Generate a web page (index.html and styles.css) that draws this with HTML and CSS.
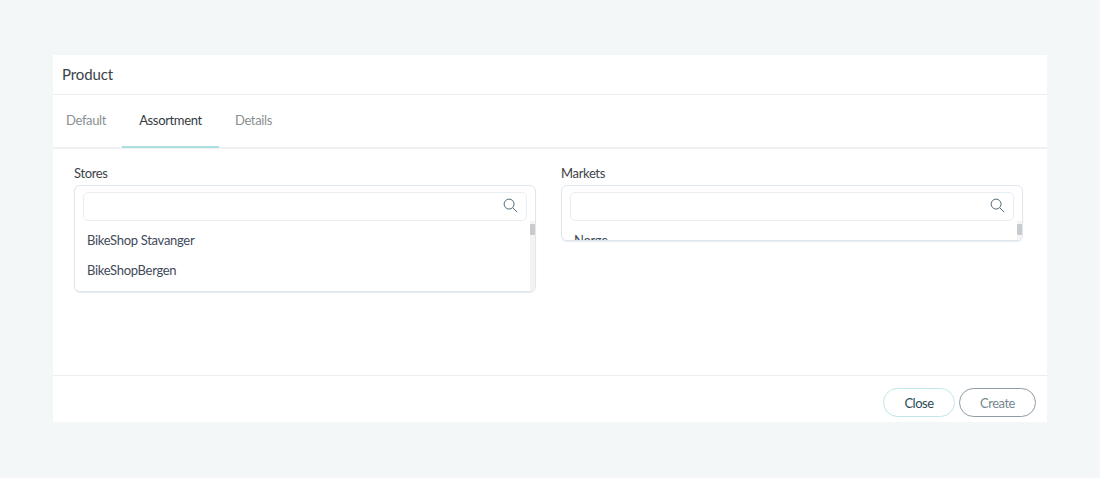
FILE: index.html
```html
<!DOCTYPE html>
<html lang="en">
<head>
<meta charset="utf-8">
<title>Product</title>
<link rel="stylesheet" href="styles.css">
</head>
<body>
<main class="card">
  <header class="card-title">Product</header>
  <nav class="tabs">
    <a class="tab">Default</a>
    <a class="tab active">Assortment</a>
    <a class="tab">Details</a>
  </nav>
  <section class="content">
    <div class="field">
      <label class="label">Stores</label>
      <div class="picker picker-tall">
        <div class="search">
          <svg class="icon" viewBox="0 0 16 16" width="16" height="16"><circle cx="6.5" cy="6.5" r="5.3"/><path d="M10.4 10.4 15 15"/></svg>
        </div>
        <div class="list">
          <div class="scroll"><span class="thumb"></span></div>
          <div class="item">BikeShop Stavanger</div>
          <div class="item">BikeShopBergen</div>
        </div>
      </div>
    </div>
    <div class="field">
      <label class="label">Markets</label>
      <div class="picker picker-short">
        <div class="search">
          <svg class="icon" viewBox="0 0 16 16" width="16" height="16"><circle cx="6.5" cy="6.5" r="5.3"/><path d="M10.4 10.4 15 15"/></svg>
        </div>
        <div class="list">
          <div class="scroll"><span class="thumb"></span></div>
          <div class="item">Norge</div>
        </div>
      </div>
    </div>
  </section>
  <footer class="actions">
    <button class="btn btn-close">Close</button>
    <button class="btn btn-create">Create</button>
  </footer>
</main>
</body>
</html>
```

FILE: styles.css
```css
* { box-sizing: border-box; }
html, body { height: 100%; }
body {
  margin: 0;
  background: #f4f7f8;
  font-family: "Lato", "Open Sans", sans-serif;
  padding: 55px 53px 56px;
}
.card {
  background: #fff;
  width: 994px;
  height: 367px;
  display: flex;
  flex-direction: column;
}
.card-title {
  height: 40px;
  padding: 9px 9px 0;
  border-bottom: 1px solid #ebeeef;
  font-size: 15px;
  line-height: 20px;
  letter-spacing: -0.1px;
  color: #3b4247;
}
.tabs {
  display: flex;
  height: 54px;
  border-bottom: 2px solid #eef0f1;
}
.tab {
  width: 69px;
  height: 53px;
  padding-top: 16px;
  font-size: 13px;
  line-height: 18px;
  text-align: center;
  color: #8a8f92;
  letter-spacing: -0.35px;
}
.tab.active {
  width: 97px;
  color: #343b40;
  border-bottom: 2px solid #abdfe0;
}
.tab:first-child { text-align: left; padding-left: 13px; }
.content {
  flex: 1;
  display: grid;
  grid-template-columns: 462px 462px;
  column-gap: 25px;
  padding: 15px 21px 0;
  align-content: start;
}
.label {
  display: block;
  height: 21px;
  font-size: 13px;
  line-height: 18px;
  color: #3b4247;
  letter-spacing: -0.35px;
}
.picker {
  border: 1px solid #dfe6ee;
  border-radius: 6px;
  padding: 6px 8px 0;
  overflow: hidden;
  box-shadow: 0 1px 1px #e8ebef;
}
.picker-tall { height: 107px; }
.picker-short { height: 56px; }
.search {
  height: 29px;
  border: 1px solid #e9edf2;
  border-radius: 5px;
  display: flex;
  justify-content: flex-end;
  align-items: center;
  padding: 0 8px 2px 0;
}
.icon {
  fill: none;
  stroke: #46626f;
  stroke-width: 1;
  width: 15px;
  height: 15px;
}
.list { margin: 0 -8px; height: 70px; position: relative; padding-left: 12px; }
.scroll {
  position: absolute;
  right: 0;
  top: 0;
  bottom: 0;
  width: 5px;
  background: #f3f3f3;
}
.thumb {
  display: block;
  margin-top: 3px;
  height: 11px;
  background: #c8cacb;
  border-radius: 1px;
}
.item {
  height: 30px;
  padding-top: 10px;
  font-size: 13px;
  line-height: 18px;
  color: #3f4a5a;
  letter-spacing: -0.3px;
}
.actions {
  height: 47px;
  border-top: 1px solid #ebeeef;
  display: flex;
  justify-content: flex-end;
  gap: 4px;
  padding: 12px 11px 0 0;
}
.btn {
  height: 29px;
  border-radius: 15px;
  background: #fff;
  font-family: inherit;
  font-size: 13px;
  letter-spacing: -0.5px;
  padding: 0;
}
.btn-close { width: 72px; border: 1px solid #c0e6ea; color: #2c4a57; }
.btn-create { width: 77px; border: 1px solid #8e9ca5; color: #76878f; }
```
